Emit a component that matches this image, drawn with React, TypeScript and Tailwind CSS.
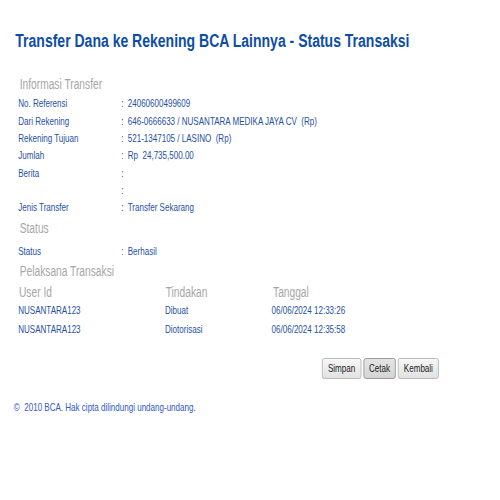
import * as React from 'react';

const rows: [string, string][] = [
    ['No. Referensi', '24060600499609'],
    ['Dari Rekening', '646-0666633 / NUSANTARA MEDIKA JAYA CV\u00a0\u00a0(Rp)'],
    ['Rekening Tujuan', '521-1347105 / LASINO\u00a0\u00a0(Rp)'],
    ['Jumlah', 'Rp\u00a0\u00a024,735,500.00'],
    ['Berita', ''],
    ['', ''],
    ['Jenis Transfer', 'Transfer Sekarang'],
];

const history = [
    ['NUSANTARA123', 'Dibuat', '06/06/2024 12:33:26'],
    ['NUSANTARA123', 'Diotorisasi', '06/06/2024 12:35:58'],
];

const Row = ({ label, value }: { label: string; value: string }) => (
    <div className="flex text-[11px] leading-[17.33px] text-[#1f50a3]">
        <div className="w-[141px]">{label}</div>
        <div className="w-[9px]">:</div>
        <div>{value}</div>
    </div>
);

const Heading = ({ children, className = '' }: { children: React.ReactNode; className?: string }) => (
    <div className={`pl-[2px] text-[14px] leading-[18px] text-[#a6a6a6] ${className}`}>{children}</div>
);

const Btn = ({ label, active }: { label: string; active?: boolean }) => (
    <button
        className={
            active
                ? 'h-[21px] rounded-[3px] border-y border-x-[1.4px] border-[#8c8c8c] bg-gradient-to-b from-[#e4e4e4] to-[#d4d4d4] px-[7px] text-[11px] leading-[19px] text-[#222]'
                : 'h-[21px] rounded-[3px] border-y border-x-[1.4px] border-[#b0b0b0] bg-gradient-to-b from-[#f7f7f7] to-[#e2e2e2] px-[7px] text-[11px] leading-[19px] text-[#222]'
        }
    >
        {label}
    </button>
);

export default function App() {
    return (
        <div className="w-full overflow-hidden bg-white">
            {/* page was captured wider and squeezed horizontally */}
            <div
                className="w-[685px] origin-top-left scale-x-[0.73] pt-[30px] pb-[60px]"
                style={{ fontFamily: '"Liberation Sans", Arial, sans-serif' }}
            >
                <h1 className="pl-[21px] text-[19.2px] font-bold leading-[22px] text-[#0e4da4]">
                    Transfer Dana ke Rekening BCA Lainnya - Status Transaksi
                </h1>

                <div className="pl-[25px]">
                    <Heading className="mt-[23px]">Informasi Transfer</Heading>
                    <div className="mt-[2.4px]">
                        {rows.map(([l, v], i) => (
                            <Row key={i} label={l} value={v} />
                        ))}
                    </div>

                    <Heading className="mt-[2.7px]">Status</Heading>
                    <div className="mt-[5.3px]">
                        <Row label="Status" value="Berhasil" />
                    </div>

                    <Heading className="mt-[2.4px]">Pelaksana Transaksi</Heading>
                    <div className="mt-[2.7px] grid grid-cols-[201px_146px_1fr] text-[14px] leading-[18px] text-[#a6a6a6]">
                        <div className="pl-[1px]">User Id</div>
                        <div className="pl-[1px]">Tindakan</div>
                        <div className="pl-[2px]">Tanggal</div>
                    </div>
                    {history.map((h, i) => (
                        <div
                            key={i}
                            className="grid grid-cols-[201px_146px_1fr] text-[11px] leading-[18.7px] text-[#1f50a3]"
                        >
                            <div>{h[0]}</div>
                            <div>{h[1]}</div>
                            <div>{h[2]}</div>
                        </div>
                    ))}
                </div>

                <div className="mt-[20px] flex w-[601px] justify-end gap-[3px]">
                    <Btn label="Simpan" />
                    <Btn label="Cetak" active />
                    <Btn label="Kembali" />
                </div>

                <div className="mt-[20px] pl-[19px] text-[11px] leading-[16px] text-[#3158c4]">
                    ©&nbsp; 2010 BCA. Hak cipta dilindungi undang-undang.
                </div>
            </div>
        </div>
    );
}
